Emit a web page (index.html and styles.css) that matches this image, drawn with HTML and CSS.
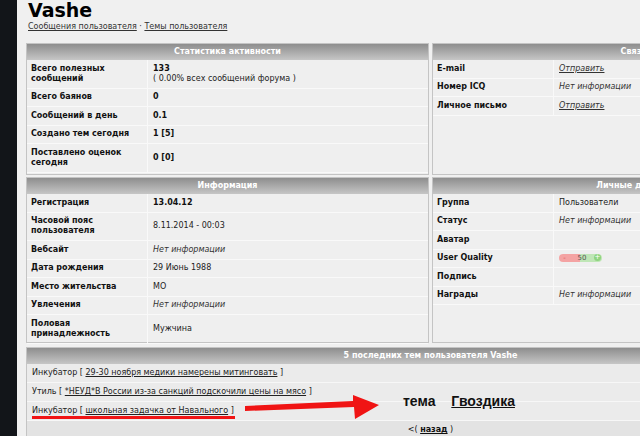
FILE: index.html
```html
<!DOCTYPE html>
<html lang="ru">
<head>
<meta charset="utf-8">
<title>Vashe</title>
<link rel="stylesheet" href="styles.css">
</head>
<body>
<div class="side"></div>
<main class="page">
  <h1 class="title">Vashe</h1>
  <div class="crumbs"><a href="#">Сообщения пользователя</a> · <a href="#">Темы пользователя</a></div>

  <div class="grid">
    <section class="panel">
      <div class="phead">Статистика активности</div>
      <table class="ptable">
        <tr><th>Всего полезных сообщений</th><td><b>133</b><br>( 0.00% всех сообщений форума )</td></tr>
        <tr><th>Всего баянов</th><td><b>0</b></td></tr>
        <tr><th>Сообщений в день</th><td><b>0.1</b></td></tr>
        <tr><th>Создано тем сегодня</th><td><b>1 [5]</b></td></tr>
        <tr><th>Поставлено оценок сегодня</th><td><b>0 [0]</b></td></tr>
      </table>
    </section>
    <section class="panel">
      <div class="phead">Связь</div>
      <table class="ptable">
        <tr><th>E-mail</th><td><a class="ilink" href="#">Отправить</a></td></tr>
        <tr><th>Номер ICQ</th><td><i>Нет информации</i></td></tr>
        <tr><th>Личное письмо</th><td><a class="ilink" href="#">Отправить</a></td></tr>
      </table>
    </section>
    <section class="panel">
      <div class="phead">Информация</div>
      <table class="ptable">
        <tr><th>Регистрация</th><td><b>13.04.12</b></td></tr>
        <tr><th>Часовой пояс пользователя</th><td>8.11.2014 - 00:03</td></tr>
        <tr><th>Вебсайт</th><td><i>Нет информации</i></td></tr>
        <tr><th>Дата рождения</th><td>29 Июнь 1988</td></tr>
        <tr><th>Место жительства</th><td>МО</td></tr>
        <tr><th>Увлечения</th><td><i>Нет информации</i></td></tr>
        <tr><th>Половая принадлежность</th><td>Мужчина</td></tr>
      </table>
    </section>
    <section class="panel">
      <div class="phead">Личные данные</div>
      <table class="ptable">
        <tr><th>Группа</th><td>Пользователи</td></tr>
        <tr><th>Статус</th><td><i>Нет информации</i></td></tr>
        <tr><th>Аватар</th><td></td></tr>
        <tr><th>User Quality</th><td><span class="uq"><span class="uq-minus">-</span><span class="uq-val">50</span><span class="uq-plus">+</span></span></td></tr>
        <tr><th>Подпись</th><td></td></tr>
        <tr><th>Награды</th><td><i>Нет информации</i></td></tr>
      </table>
    </section>
  </div>

  <section class="panel topics">
    <div class="phead">5 последних тем пользователя Vashe</div>
    <div class="trow">Инкубатор [ <a href="#">29-30 ноября медики намерены митинговать</a> ]</div>
    <div class="trow">Утиль [ <a href="#">*НЕУД*В России из-за санкций подскочили цены на мясо</a> ]</div>
    <div class="trow">Инкубатор [ <a href="#">школьная задачка от Навального</a> ]</div>
    <div class="tfoot">&lt;( <a href="#">назад</a> )</div>
  </section>
</main>

<div class="mark-line"></div>
<svg class="mark-arrow" width="140" height="32" viewBox="0 0 140 32">
  <polygon fill="#f01414" points="0,14 108,9 108,3 134,13 110,27 109,15 0,19"/>
</svg>
<div class="mark-text">тема <a href="#">Гвоздика</a></div>
</body>
</html>
```
FILE: styles.css
```css
html, body {
  margin: 0;
  padding: 0;
  overflow: hidden;
  height: 100%;
}
body {
  display: flex;
  background: #f0f0f0;
  font-family: "DejaVu Sans", Verdana, sans-serif;
  font-size: 8px;
  color: #111;
}
.side {
  flex: 0 0 17px;
  background: #121519;
}
.page {
  flex: 0 0 808px;
  padding-left: 9px;
}
.title {
  margin: -1px 0 0 2px;
  font-size: 19px;
  line-height: 22px;
  font-weight: bold;
  color: #000;
}
.crumbs {
  margin: 1px 0 0 2px;
  line-height: 9px;
  color: #333;
}
.crumbs a {
  color: #333;
}
.grid {
  margin-top: 12px;
  display: grid;
  grid-template-columns: 403px 403px;
  grid-template-rows: 132px 166px;
  column-gap: 3px;
  row-gap: 2px;
}
.panel {
  border: 1px solid #c4c4c4;
  background: #efefef;
  box-sizing: border-box;
}
.phead {
  height: 16px;
  line-height: 16px;
  text-align: center;
  font-weight: bold;
  color: #fff;
  background: linear-gradient(#8e8e8e, #c6c6c6);
}
.ptable {
  width: 100%;
  border-collapse: collapse;
}
.ptable th,
.ptable td {
  text-align: left;
  vertical-align: middle;
  padding: 3.75px 4px;
  line-height: 10px;
  border-bottom: 1px solid #f9f9f9;
}
.ptable th {
  width: 112px;
  font-weight: bold;
  border-right: 1px solid #f9f9f9;
}
.ptable td {
  padding-left: 5px;
  color: #222;
}
.ptable td b {
  color: #111;
}
.ptable i {
  color: #333;
}
.ilink {
  font-style: italic;
  color: #333;
}
.uq {
  display: inline-flex;
  align-items: center;
  height: 8px;
  width: 43px;
  border-radius: 4px;
  overflow: hidden;
  font-size: 7px;
  line-height: 8px;
  vertical-align: middle;
  background: linear-gradient(90deg, #f4a3a3 0, #f4a3a3 50%, #bfe6b6 50%, #bfe6b6 100%);
}
.uq-minus {
  width: 11px;
  text-align: center;
  color: #e05050;
}
.uq-val {
  flex: 1;
  text-align: center;
  color: #555;
}
.uq-plus {
  width: 7px;
  height: 7px;
  margin-right: 1px;
  border-radius: 50%;
  background: #8fd47f;
  color: #fff;
  font-size: 7px;
  line-height: 7px;
  text-align: center;
}
.topics {
  margin-top: 4px;
  background: #ebebeb;
}
.trow {
  height: 18px;
  line-height: 18px;
  padding-left: 5px;
  border-bottom: 1px solid #f7f7f7;
  color: #222;
}
.trow a {
  color: #222;
}
.tfoot {
  height: 18px;
  line-height: 18px;
  text-align: center;
  background: #e3e3e3;
  color: #111;
}
.tfoot a {
  color: #111;
  font-weight: bold;
}
.mark-line {
  position: absolute;
  left: 32px;
  top: 416px;
  width: 203px;
  height: 3px;
  background: #f01414;
}
.mark-arrow {
  position: absolute;
  left: 245px;
  top: 392px;
}
.mark-text {
  position: absolute;
  left: 403px;
  top: 393px;
  font-family: "Liberation Sans", Arial, sans-serif;
  font-weight: bold;
  font-size: 14px;
  color: #111;
}
.mark-text a {
  margin-left: 12px;
  color: #111;
}
```
